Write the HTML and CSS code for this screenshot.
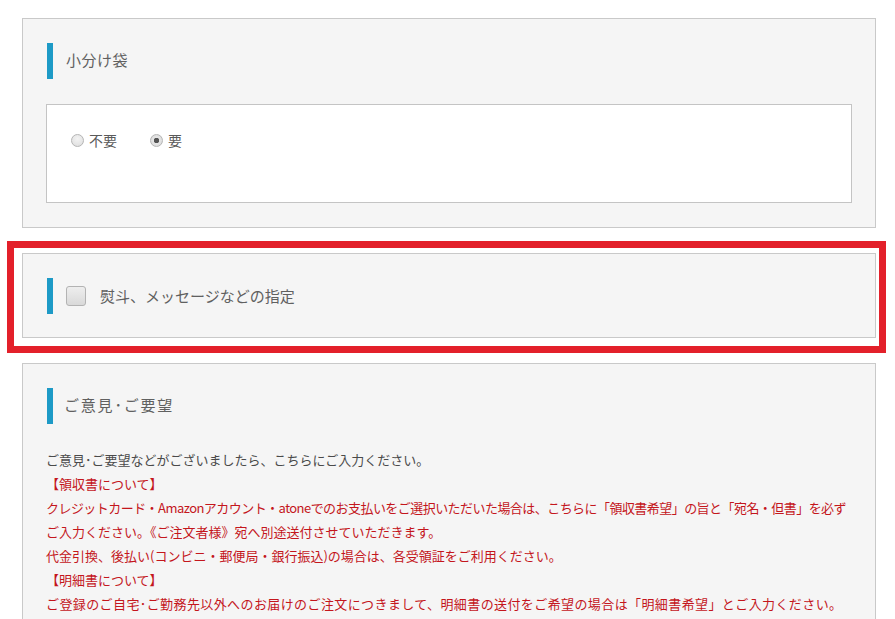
FILE: index.html
```html
<!DOCTYPE html>
<html lang="ja">
<head>
<meta charset="utf-8">
<link rel="stylesheet" href="styles.css">
</head>
<body>
<div class="page">
  <section class="panel">
    <h2 class="heading"><span class="bar"></span><span class="title">小分け袋</span></h2>
    <div class="choice-box">
      <label class="radio"><input type="radio" name="bag"><span>不要</span></label>
      <label class="radio"><input type="radio" name="bag" checked><span>要</span></label>
    </div>
  </section>

  <div class="highlight">
    <section class="panel panel-check">
      <h2 class="heading"><span class="bar"></span><label class="check"><input type="checkbox"><span class="check-label">熨斗、メッセージなどの指定</span></label></h2>
    </section>
  </div>

  <section class="panel panel-note">
    <h2 class="heading"><span class="bar"></span><span class="title spaced">ご意見･ご要望</span></h2>
    <div class="note">
      <p class="line grey">ご意見･ご要望などがございましたら、こちらにご入力ください。</p>
      <p class="line">【領収書について】</p>
      <p class="line tight">クレジットカード・Amazonアカウント・atoneでのお支払いをご選択いただいた場合は、こちらに「領収書希望」の旨と「宛名・但書」を必ず</p>
      <p class="line">ご入力ください。《ご注文者様》宛へ別途送付させていただきます。</p>
      <p class="line">代金引換、後払い(コンビニ・郵便局・銀行振込)の場合は、各受領証をご利用ください。</p>
      <p class="line">【明細書について】</p>
      <p class="line wide">ご登録のご自宅･ご勤務先以外へのお届けのご注文につきまして、明細書の送付をご希望の場合は「明細書希望」とご入力ください。</p>
    </div>
  </section>
</div>
</body>
</html>
```

FILE: styles.css
```css
html, body {
  margin: 0;
  padding: 0;
  background: #ffffff;
}

body {
  font-family: "Noto Sans CJK JP", "Noto Sans", sans-serif;
  color: #555555;
  overflow: hidden;
}

.page {
  width: 854px;
  padding: 18px 0 0 22px;
}

.panel {
  box-sizing: border-box;
  width: 854px;
  border: 1px solid #c9c9c9;
  background: #f5f5f5;
  padding: 24px 23px 24px 24px;
}

.heading {
  margin: 0;
  display: flex;
  align-items: center;
  height: 36px;
  font-weight: normal;
}

.bar {
  width: 6px;
  height: 36px;
  background: #1d9ac6;
  flex: none;
}

.title {
  margin-left: 13px;
  padding-bottom: 3px;
  font-size: 15px;
  color: #606060;
  letter-spacing: 0.5px;
}

.title.spaced {
  margin-left: 11px;
  letter-spacing: 1.8px;
}

.choice-box {
  box-sizing: border-box;
  margin: 25px 0 0 -1px;
  height: 99px;
  background: #ffffff;
  border: 1px solid #c4c4c4;
  padding: 25px 24px 0 24px;
  display: flex;
  align-items: flex-start;
  gap: 33px;
}

.radio {
  display: flex;
  align-items: center;
  gap: 5px;
  font-size: 14px;
  color: #5a5a5a;
  line-height: 20px;
}

.radio input {
  appearance: none;
  -webkit-appearance: none;
  margin: 0;
  width: 13px;
  height: 13px;
  border-radius: 50%;
  border: 1px solid #b5b5b5;
  background: radial-gradient(circle at 50% 35%, #f3f3f3 0%, #dcdcdc 100%);
  box-sizing: border-box;
}

.radio input:checked {
  background: radial-gradient(circle, #555555 0, #555555 2.5px, #e6e6e6 3px, #d6d6d6 100%);
}

.highlight {
  box-sizing: border-box;
  width: 879px;
  margin: 13px 0 0 -15px;
  border: 7px solid #e3202a;
  padding: 5px 2px 8px 8px;
}

.panel-check {
  padding-bottom: 23px;
}

.check {
  display: flex;
  align-items: center;
  margin-left: 13px;
}

.check input {
  appearance: none;
  -webkit-appearance: none;
  margin: 0;
  width: 20px;
  height: 20px;
  border-radius: 3px;
  border: 1px solid #b3b3b3;
  background: linear-gradient(#eeeeee, #d9d9d9);
  box-sizing: border-box;
}

.check-label {
  margin-left: 14px;
  padding-bottom: 2px;
  font-size: 15px;
  color: #606060;
}

.panel-note {
  margin-top: 10px;
  height: 300px;
}

.note {
  margin: 24px 0 0 -1px;
  font-size: 13px;
  line-height: 24px;
  white-space: nowrap;
}

.line {
  margin: 0;
  color: #c4161c;
}

.line.grey {
  color: #4a4a4a;
}

.line.tight {
  letter-spacing: -0.55px;
}

.line.wide {
  letter-spacing: 0.4px;
}
```
